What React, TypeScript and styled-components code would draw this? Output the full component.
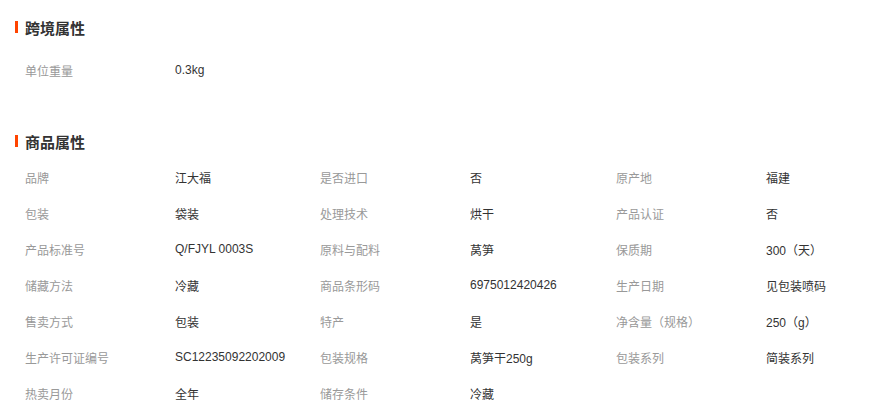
import styled, { createGlobalStyle } from "styled-components";

const GlobalStyle = createGlobalStyle`
  body {
    margin: 0;
    background: #fff;
    font-family: "Liberation Sans", "Noto Sans CJK SC", sans-serif;
  }
`;

const crossBorder = [["单位重量", "0.3kg"]];

const goods = [
  ["品牌", "江大福"],
  ["是否进口", "否"],
  ["原产地", "福建"],
  ["包装", "袋装"],
  ["处理技术", "烘干"],
  ["产品认证", "否"],
  ["产品标准号", "Q/FJYL 0003S"],
  ["原料与配料", "莴笋"],
  ["保质期", "300（天）"],
  ["储藏方法", "冷藏"],
  ["商品条形码", "6975012420426"],
  ["生产日期", "见包装喷码"],
  ["售卖方式", "包装"],
  ["特产", "是"],
  ["净含量（规格）", "250（g）"],
  ["生产许可证编号", "SC12235092202009"],
  ["包装规格", "莴笋干250g"],
  ["包装系列", "简装系列"],
  ["热卖月份", "全年"],
  ["储存条件", "冷藏"],
];

const Attributes = () => {
  return (
    <Page>
      <Section $gap={15}>
        <Title>跨境属性</Title>
        <Grid>
          {crossBorder.map(([k, v]) => (
            <Item key={k}>
              <Label>{k}</Label>
              <Value>{v}</Value>
            </Item>
          ))}
        </Grid>
      </Section>
      <Section $gap={8} $top={43}>
        <Title>商品属性</Title>
        <Grid>
          {goods.map(([k, v]) => (
            <Item key={k}>
              <Label>{k}</Label>
              <Value>{v}</Value>
            </Item>
          ))}
        </Grid>
      </Section>
    </Page>
  );
};

const Page = styled.div`
  width: 870px;
  padding: 17px 0 0 15px;
  box-sizing: border-box;
`;

const Section = styled.div<{ $gap: number; $top?: number }>`
  display: flex;
  flex-direction: column;
  gap: ${(p) => p.$gap}px;
  margin-top: ${(p) => p.$top || 0}px;
`;

const Title = styled.h3`
  margin: 0;
  height: 20px;
  display: flex;
  align-items: center;
  gap: 7px;
  font-size: 15px;
  font-weight: bold;
  color: #333;

  &::before {
    content: "";
    width: 3px;
    height: 12px;
    background: #ff4400;
  }
`;

const Grid = styled.div`
  display: grid;
  grid-template-columns: 295px 296px 296px;
  padding-left: 10px;
`;

const Item = styled.div`
  display: flex;
  height: 36px;
  align-items: center;
  font-size: 12px;
`;

const Label = styled.span`
  width: 150px;
  color: #999;
`;

const Value = styled.span`
  color: #333;
`;

export default function App() {
  return (
    <>
      <GlobalStyle />
      <Attributes />
    </>
  );
}
